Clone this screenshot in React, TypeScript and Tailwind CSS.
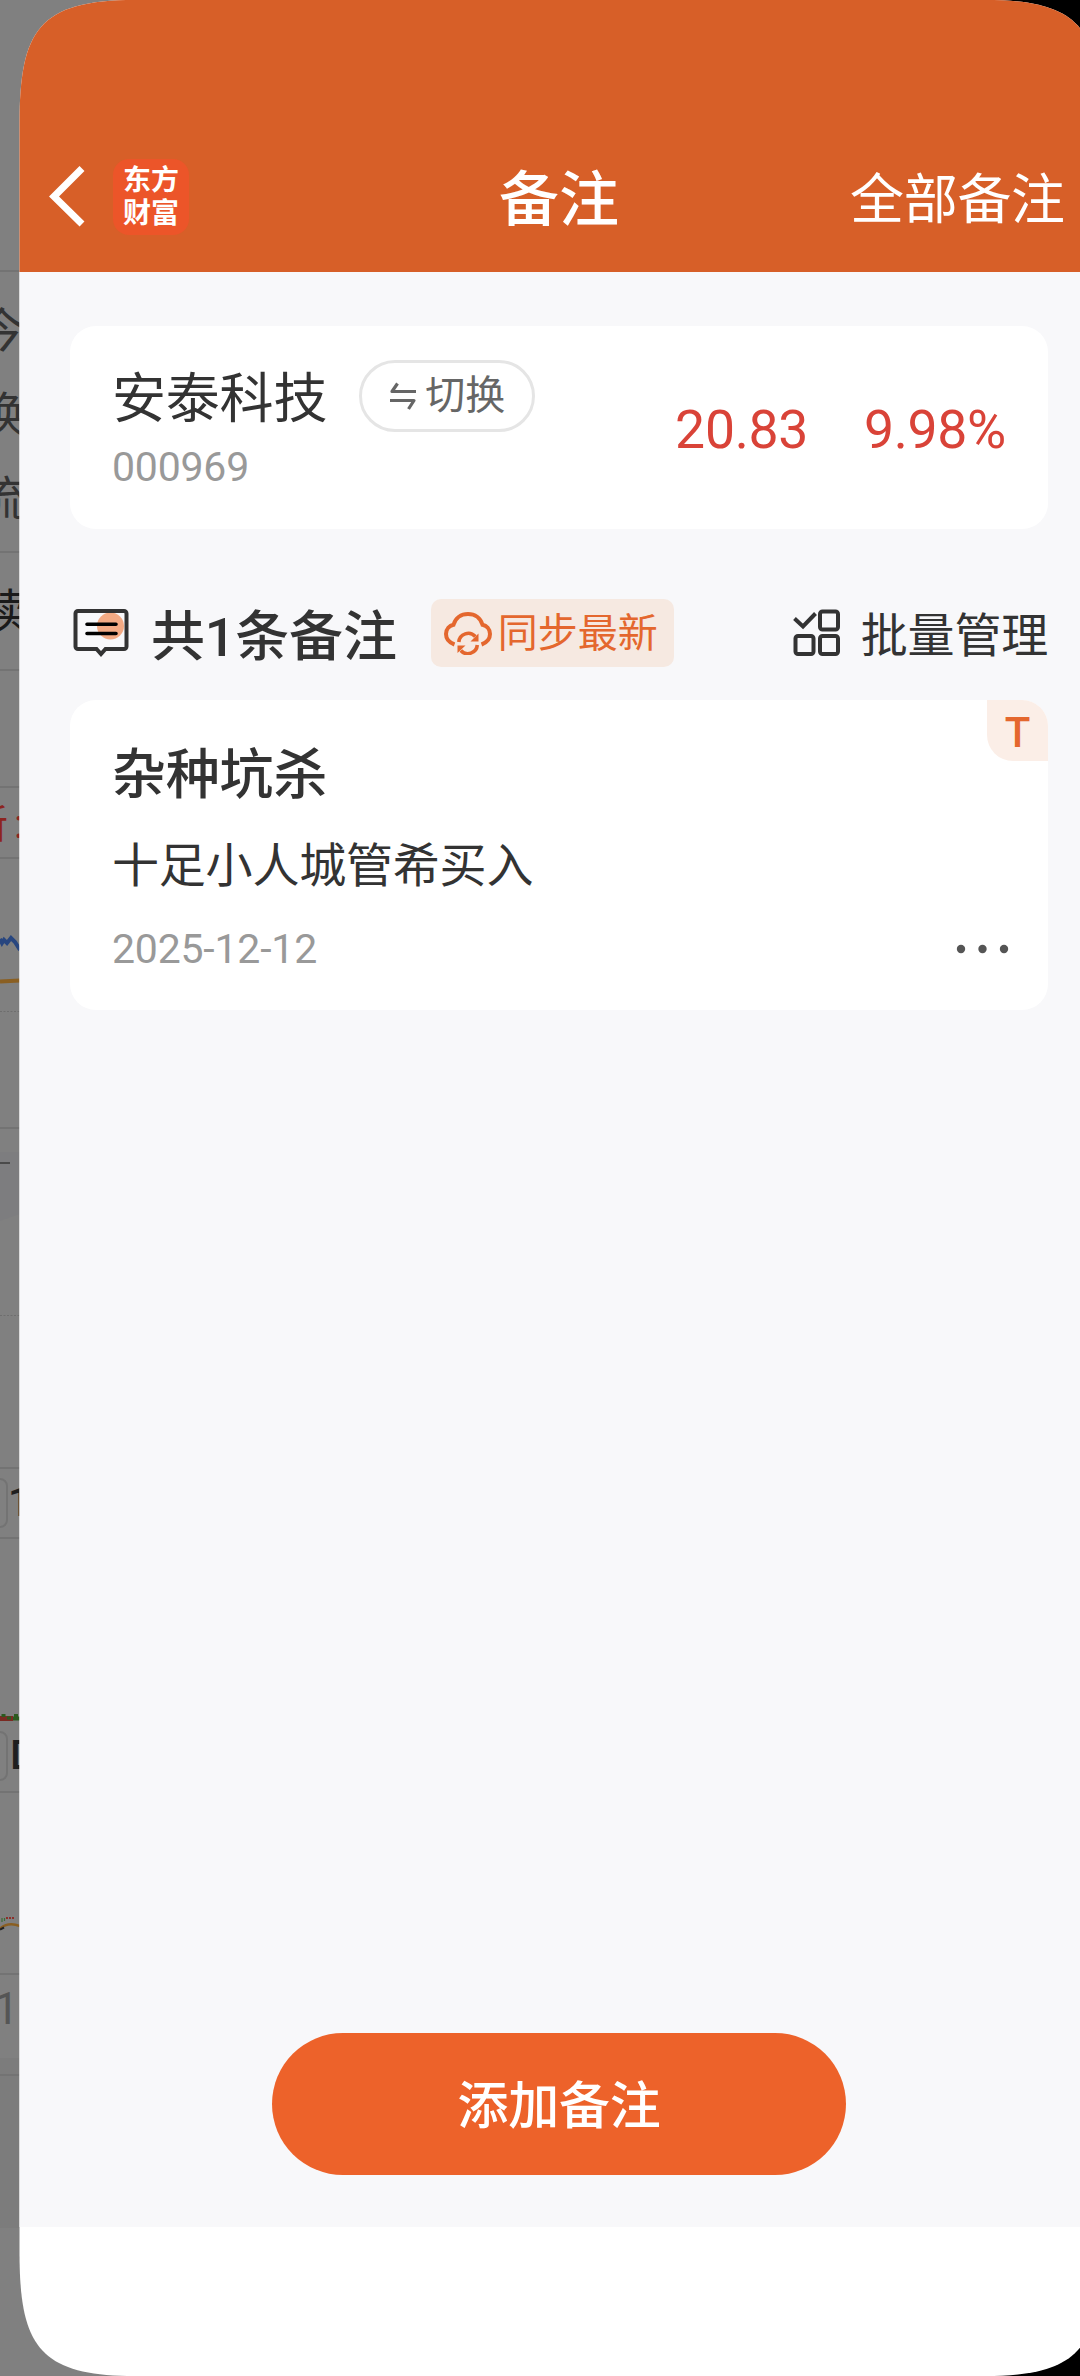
import type { ReactNode } from "react";

type QuoteCardProps = {
  name: string;
  code: string;
  price: string;
  change: string;
};

type NoteCardProps = {
  title: string;
  content: string;
  date: string;
};

function BackIcon() {
  return (
    <svg width="40" height="66" viewBox="0 0 40 66" fill="none">
      <path d="M35 4.500 7 32.500l28 27.500" stroke="#fff" strokeWidth="7" />
    </svg>
  );
}

function SwapIcon() {
  return (
    <svg width="28" height="28" viewBox="0 0 28 28" fill="none" stroke="#666" strokeWidth="3.200">
      <path d="M27 9.500H3L8.500 1.500" strokeLinejoin="round" />
      <path d="M1 18.500h24L19.500 27" strokeLinejoin="round" />
    </svg>
  );
}

function CommentIcon() {
  return (
    <svg width="56" height="50" viewBox="0 0 56 50" fill="none">
      <circle cx="37.500" cy="18" r="13.500" fill="#f3aa84" />
      <path
        d="M5 3h46a2.500 2.500 0 0 1 2.500 2.500v33A2.500 2.500 0 0 1 51 41H32.500L28 46l-4.500-5H5a2.500 2.500 0 0 1-2.500-2.500v-33A2.500 2.500 0 0 1 5 3Z"
        stroke="#333"
        strokeWidth="4"
      />
      <path d="M14 16.200h29M14 25.500h29" stroke="#000" strokeWidth="3.600" strokeLinecap="round" />
    </svg>
  );
}

function CloudSyncIcon() {
  return (
    <svg width="50" height="44" viewBox="0 0 50 44" fill="none" stroke="#e4672e" strokeWidth="4">
      <path d="M11.500 33.500C6 31.500 3 27.500 3 23c0-5 3.500-8.500 7.500-9.300C12.500 7 18 3 25 3s12.500 4 14.500 10.700C43.500 14.500 47 18 47 23c0 4.500-3 8.500-8.500 10.500" />
      <path d="M15.800 31a9.500 9.500 0 0 1 16.500-5.500M34.300 34a9.500 9.500 0 0 1-16.500 5.500" strokeWidth="3.600" />
      <path d="M35.500 22.500v8h-8zM14.500 42v-7.500h8z" fill="#e4672e" stroke="none" />
    </svg>
  );
}

function BatchIcon() {
  return (
    <svg width="48" height="48" viewBox="0 0 48 48" fill="none" stroke="#333" strokeWidth="4">
      <path d="m1.500 9.500 8.500 8L22.500 4.500" />
      <rect x="27" y="2.500" width="18" height="18" rx="2.500" />
      <rect x="2.500" y="27" width="18" height="18" rx="2.500" />
      <rect x="27" y="27" width="18" height="18" rx="2.500" />
    </svg>
  );
}

function MoreIcon() {
  return (
    <svg width="54" height="10" viewBox="0 0 54 10" fill="#555">
      <circle cx="5" cy="5" r="4.200" />
      <circle cx="26.500" cy="5" r="4.200" />
      <circle cx="48" cy="5" r="4.200" />
    </svg>
  );
}

function BackdropRow({ className, children }: { className: string; children?: ReactNode }) {
  return (
    <div className={`flex shrink-0 items-center overflow-hidden border-b-2 border-[#737373] whitespace-nowrap ${className}`}>
      {children}
    </div>
  );
}

/**
 * Dimmed quote page that stays visible along the left edge of the sheet.
 */
function Backdrop() {
  return (
    <div className="absolute inset-y-0 left-0 w-[540px] bg-[#808080]">
      <div className="flex h-full w-[20px] flex-col overflow-hidden text-[#333]">
        <BackdropRow className="h-[272px]" />
        <BackdropRow className="h-[281px]">
          <div className="-ml-[22px] pt-[6px] text-[47px] leading-[84px]">
            <p>今</p>
            <p>换</p>
            <p>流</p>
          </div>
        </BackdropRow>
        <BackdropRow className="h-[118px]">
          <span className="-ml-[20px] text-[46px] text-[#1a1a1a]">续</span>
        </BackdropRow>
        <BackdropRow className="h-[117px]" />
        <BackdropRow className="h-[71px] pt-[4px]">
          <span className="-ml-[32px] text-[40px] text-[#8c2420]">新</span>
          <span className="ml-[6px] text-[40px] text-[#8c2420]">:</span>
        </BackdropRow>
        <BackdropRow className="h-[270px]">
          <svg width="20" height="268" viewBox="0 0 20 268" fill="none">
            <path d="M0 80l2 4 2-3 3 3 4-5 4 4 5 8" stroke="#28467f" strokeWidth="4" />
            <path d="M0 122.500 20 121.500" stroke="#8a5f22" strokeWidth="4" />
            <path d="M0 152.500h20" stroke="#6e6e6e" strokeDasharray="2 1.500" />
          </svg>
        </BackdropRow>
        <BackdropRow className="h-[340px]">
          <svg width="20" height="338" viewBox="0 0 20 338" fill="none">
            <path d="M0 23h20v62L0 92z" fill="#7d7d7f" />
            <path d="M0 34h10" stroke="#4a4a4a" strokeWidth="2" />
            <path d="M0 186.500h20" stroke="#6e6e6e" strokeDasharray="2 1.500" />
          </svg>
        </BackdropRow>
        <BackdropRow className="h-[70px]">
          <span className="-ml-[12px] h-[50px] w-[20px] shrink-0 rounded-lg border-2 border-[#737373]" />
          <span className="text-[41px] font-medium text-[#1f1f1f]">1</span>
        </BackdropRow>
        <svg className="shrink-0" width="20" height="189" viewBox="0 0 20 189" fill="none">
          <path d="M0 179.500h13" stroke="#7a2a22" strokeWidth="5" />
          <path d="M3.500 175v3M9 177.500v3M13 179.500h7M16 175v4" stroke="#2b5a1e" strokeWidth="4" />
        </svg>
        <BackdropRow className="h-[65px] pb-[8px]">
          <span className="-ml-[12px] h-[50px] w-[20px] shrink-0 rounded-lg border-2 border-[#737373]" />
          <span className="ml-[2px] text-[41px] font-medium text-[#1f1f1f]">D</span>
        </BackdropRow>
        <BackdropRow className="h-[182px]">
          <svg width="20" height="180" viewBox="0 0 20 180" fill="none">
            <path d="M6 125h9" stroke="#8c2f2a" strokeWidth="2" strokeDasharray="2 1" />
            <path d="M2 125v4M4.500 125v3" stroke="#3b6e35" strokeWidth="1.200" />
            <path d="M0 135.500c6-5 13-5 20-2.500" stroke="#8a5f22" strokeWidth="2.500" />
            <path d="M0 136.500l4-2" stroke="#222" strokeWidth="2" />
          </svg>
        </BackdropRow>
        <div className="flex h-[83px] shrink-0 items-center overflow-hidden pb-[16px]">
          <span className="-ml-[6px] text-[44px] text-[#555]">1</span>
        </div>
        <BackdropRow className="h-[18px] bg-[#7c7c7c]" />
        <div className="h-[152px] shrink-0 bg-[#7c7c7c]" />
      </div>
    </div>
  );
}

function Header() {
  return (
    <header className="flex h-[272px] items-end bg-[#d75f28] text-white">
      <div className="flex h-[150px] w-full items-center pl-[28px]">
        <BackIcon />
        <div className="ml-[26px] flex size-[76px] flex-col items-center justify-center rounded-2xl bg-[#ec5529] text-[28px] leading-[33px] font-bold">
          <span>东方</span>
          <span>财富</span>
        </div>
        <h1 className="ml-[310px] pt-[7px] text-[60px] font-medium">备注</h1>
        <button className="ml-[231px] shrink-0 pt-[6px] text-[54px] tracking-[-0.3px] whitespace-nowrap">全部备注</button>
      </div>
    </header>
  );
}

function QuoteCard({ name, code, price, change }: QuoteCardProps) {
  return (
    <section className="flex h-[203px] items-center justify-between rounded-[26px] bg-white px-[42px]">
      <div className="pb-[3px]">
        <div className="flex items-center">
          <h2 className="pt-[8px] text-[54px] leading-[64px] tracking-[-0.2px] text-[#333]">{name}</h2>
          <button className="ml-[32px] flex h-[72px] w-[176px] items-center justify-center gap-2 rounded-full border-[3px] border-[#e5e5e5] pt-px text-[40px] leading-none text-[#666]">
            <SwapIcon />
            切换
          </button>
        </div>
        <p className="mt-[9px] text-[41px] leading-[52px] tracking-[-0.2px] text-[#999]">{code}</p>
      </div>
      <div className="flex gap-[56px] pt-[5px] text-[53.500px] tracking-[-0.3px] text-[#d94338]">
        <span>{price}</span>
        <span>{change}</span>
      </div>
    </section>
  );
}

function NoteToolbar({ count }: { count: number }) {
  return (
    <div className="mt-[70px] flex h-[68px] items-center pl-[3px]">
      <CommentIcon />
      <h2 className="ml-[22px] pt-[10px] text-[54px] leading-[58px] font-medium tracking-[-0.2px] text-[#333]">共{count}条备注</h2>
      <button className="ml-[34px] flex h-[68px] w-[243px] items-center rounded-[10px] bg-[#f6e9e1] pl-3 text-[40px] leading-none text-[#e4672e]">
        <CloudSyncIcon />
        <span className="ml-[5px] pt-px">同步最新</span>
      </button>
      <button className="ml-auto flex items-center text-[47px] leading-none text-[#333]">
        <BatchIcon />
        <span className="ml-[20px] pt-[5px] tracking-[-0.2px]">批量管理</span>
      </button>
    </div>
  );
}

function NoteCard({ title, content, date }: NoteCardProps) {
  return (
    <article className="relative mt-[33px] h-[310px] rounded-[26px] bg-white px-[42px] pt-[40px] text-[#333]">
      <span className="absolute top-0 right-0 flex size-[61px] items-center justify-center rounded-tr-[26px] rounded-bl-[26px] bg-[#fbeee7] pt-[3px] text-[42px] font-medium text-[#e4672e]">
        T
      </span>
      <h3 className="text-[54px] leading-[72px] font-medium tracking-[-0.2px]">{title}</h3>
      <p className="mt-[22px] text-[47px] leading-[64px] tracking-[-0.2px]">{content}</p>
      <div className="-mr-[4px] mt-[25px] flex items-center justify-between text-[#999]">
        <time className="text-[41px] leading-[52px] tracking-[-0.2px]">{date}</time>
        <MoreIcon />
      </div>
    </article>
  );
}

export default function App() {
  return (
    <div className="relative h-[2376px] w-[1080px] overflow-hidden bg-black font-[Roboto,'Noto_Sans_CJK_SC',sans-serif]">
      <Backdrop />
      <div className="relative ml-[19px] flex h-full w-[1082px] flex-col bg-white [clip-path:path('M0.5_124C0.5_30_20_0_116_0H966C1062_0_1081.5_30_1081.5_124V2252C1081.5_2346_1062_2376_966_2376H116C20_2376_0.5_2346_0.5_2252Z')]">
        <Header />
        <main className="flex h-[1955px] w-[1061px] flex-col bg-[#f8f8fa] pt-[54px] pr-8 pl-[51px]">
          <QuoteCard name="安泰科技" code="000969" price="20.83" change="9.98%" />
          <NoteToolbar count={1} />
          <NoteCard title="杂种坑杀" content="十足小人城管希买入" date="2025-12-12" />
          <button className="mt-auto mb-[52px] ml-[202px] h-[142px] w-[574px] rounded-full bg-[#ed622a] pt-[6px] text-[51px] font-medium tracking-[-0.2px] text-white">
            添加备注
          </button>
        </main>
      </div>
    </div>
  );
}
